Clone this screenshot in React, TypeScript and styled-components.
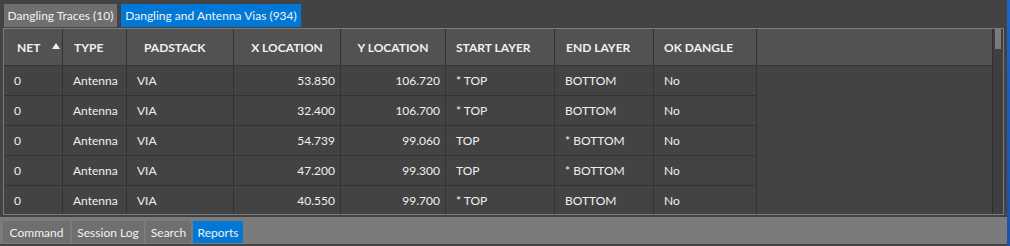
import React from "react";
import styled, { createGlobalStyle } from "styled-components";

const Global = createGlobalStyle`
  html, body { margin: 0; padding: 0; background: #434343; }
  body { font-family: Lato, "Noto Sans", sans-serif; }
`;

const FONT = `Lato, "Noto Sans", sans-serif`;

const Screen = styled.div`
  width: 1010px;
  height: 246px;
  display: flex;
  background: #434343;
  overflow: hidden;
`;

const Main = styled.div`
  width: 1007px;
  display: flex;
  flex-direction: column;
`;

const EdgeStrip = styled.div`
  flex: 1;
  background: linear-gradient(#1b66c9, #1a52a8);
`;

const TopTabs = styled.div`
  display: flex;
  gap: 4px;
  padding: 4px 0 1px 4px;
  height: 28px;
  box-sizing: border-box;
`;

const Tab = styled.div<{ $active?: boolean; $h: number; $w: number }>`
  height: ${(p) => p.$h}px;
  width: ${(p) => p.$w}px;
  display: flex;
  align-items: center;
  justify-content: center;
  background: ${(p) => (p.$active ? "#0078d7" : "#6f6f6f")};
  color: #f2f2f2;
  font-family: ${FONT};
  font-size: 12px;
  white-space: nowrap;
`;

const GridFrame = styled.div`
  margin-left: 3px;
  width: 1001px;
  height: 187px;
  box-sizing: border-box;
  border: 1px solid #7c7c7c;
  display: flex;
  overflow: hidden;
`;

const Table = styled.div`
  flex: 1;
  display: grid;
  grid-template-columns: 59px 64px 107px 107px 105px 109px 99px 103px 1fr;
  grid-template-rows: 37px;
  grid-auto-rows: 30px;
  align-content: start;
  font-family: ${FONT};
  font-size: 12px;
  color: #f0f0f0;
`;

const HeadCell = styled.div<{ $pad?: number; $center?: boolean; $filler?: boolean }>`
  background: #525252;
  border-bottom: 1px solid #353535;
  border-right: ${(p) => (p.$filler ? "none" : "1px solid #333")};
  display: flex;
  align-items: center;
  justify-content: ${(p) => (p.$center ? "center" : "flex-start")};
  padding-left: ${(p) => (p.$center ? 0 : p.$pad ?? 10)}px;
  font-weight: 700;
  white-space: nowrap;
  box-sizing: border-box;
`;

const SortArrow = styled.span`
  display: inline-block;
  width: 0;
  height: 0;
  margin-left: 12px;
  margin-top: -2px;
  border-left: 4px solid transparent;
  border-right: 4px solid transparent;
  border-bottom: 6px solid #f0f0f0;
`;

const Cell = styled.div<{ $right?: boolean; $filler?: boolean }>`
  border-bottom: ${(p) => (p.$filler ? "none" : "1px solid #333")};
  border-right: ${(p) => (p.$filler ? "none" : "1px solid #333")};
  display: flex;
  align-items: center;
  justify-content: ${(p) => (p.$right ? "flex-end" : "flex-start")};
  padding: ${(p) => (p.$right ? "0 5px 0 0" : "0 0 0 10px")};
  white-space: nowrap;
  box-sizing: border-box;
`;

const ScrollTrack = styled.div`
  width: 11px;
  border-left: 1px solid #2e2e2e;
  background: #3f3f3f;
  box-sizing: border-box;
  padding: 0 2px 0 2px;
`;

const ScrollThumb = styled.div`
  height: 20px;
  background: #7a7a7a;
`;

const Gap = styled.div`
  height: 2px;
`;

const BottomBar = styled.div`
  height: 27px;
  background: #7b7b7b;
  display: flex;
  align-items: flex-end;
  gap: 2px;
  padding: 0 0 1px 3px;
  box-sizing: border-box;
`;

const headers = [
  { label: "NET", pad: 13, sort: true },
  { label: "TYPE", pad: 11 },
  { label: "PADSTACK", pad: 17 },
  { label: "X LOCATION", center: true },
  { label: "Y LOCATION", center: true },
  { label: "START LAYER", pad: 10 },
  { label: "END LAYER", pad: 11 },
  { label: "OK DANGLE", pad: 10 },
];

const rows = [
  ["0", "Antenna", "VIA", "53.850", "106.720", "* TOP", "BOTTOM", "No"],
  ["0", "Antenna", "VIA", "32.400", "106.700", "* TOP", "BOTTOM", "No"],
  ["0", "Antenna", "VIA", "54.739", "99.060", "TOP", "* BOTTOM", "No"],
  ["0", "Antenna", "VIA", "47.200", "99.300", "TOP", "* BOTTOM", "No"],
  ["0", "Antenna", "VIA", "40.550", "99.700", "* TOP", "BOTTOM", "No"],
];

const bottomTabs = [
  { label: "Command", w: 67 },
  { label: "Session Log", w: 72 },
  { label: "Search", w: 45 },
  { label: "Reports", w: 50, active: true },
];

export default function App() {
  return (
    <>
      <Global />
      <Screen>
        <Main>
          <TopTabs>
            <Tab $h={23} $w={113}>Dangling Traces (10)</Tab>
            <Tab $h={23} $w={180} $active>
              Dangling and Antenna Vias (934)
            </Tab>
          </TopTabs>
          <GridFrame>
            <Table>
              {headers.map((h) => (
                <HeadCell key={h.label} $pad={h.pad} $center={h.center}>
                  {h.label}
                  {h.sort && <SortArrow />}
                </HeadCell>
              ))}
              <HeadCell $filler />
              {rows.map((r, i) => (
                <React.Fragment key={i}>
                  {r.map((v, j) => (
                    <Cell key={j} $right={j === 3 || j === 4}>
                      {v}
                    </Cell>
                  ))}
                  <Cell $filler />
                </React.Fragment>
              ))}
            </Table>
            <ScrollTrack>
              <ScrollThumb />
            </ScrollTrack>
          </GridFrame>
          <Gap />
          <BottomBar>
            {bottomTabs.map((t) => (
              <Tab key={t.label} $h={22} $w={t.w} $active={t.active}>
                {t.label}
              </Tab>
            ))}
          </BottomBar>
        </Main>
        <EdgeStrip />
      </Screen>
    </>
  );
}
